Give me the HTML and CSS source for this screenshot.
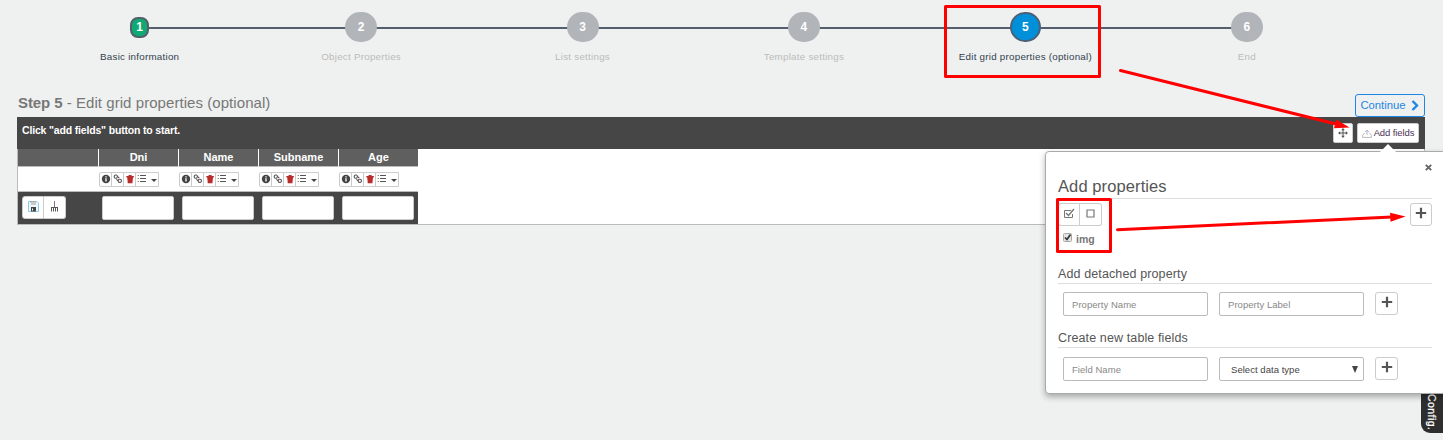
FILE: index.html
```html
<!DOCTYPE html>
<html lang="en">
<head>
<meta charset="utf-8">
<title>Edit grid properties</title>
<link rel="stylesheet" href="styles.css">
</head>
<body>
<svg class="defs" width="0" height="0">
  <symbol id="info" viewBox="0 0 10 10"><circle cx="5" cy="5" r="4.2" fill="#444"/><path d="M5 4.200v3.300M5 2.300v1.200" stroke="#fff" stroke-width="1.300" fill="none"/></symbol>
  <symbol id="link" viewBox="0 0 10 10"><g fill="none" stroke="#555" stroke-width="1.100"><rect x="1.200" y="1" width="3.200" height="3.200" rx="1.400"/><rect x="5.200" y="5.200" width="3.200" height="3.200" rx="1.400"/><path d="M4.800 2.600l1.500 1.500M3.400 5.200l1.600 1.700"/></g></symbol>
  <symbol id="trash" viewBox="0 0 10 10"><path d="M3.600 1h3v.9h2.200v1.700H1.400V1.900h2.200zM2.200 3.600h5.800l-.6 5.600H2.800z" fill="#b92c28"/></symbol>
  <symbol id="list" viewBox="0 0 10 10"><path d="M3 1.500h6M3 4.500h6M3 7.500h6" stroke="#555"/><path d="M.6 1.500h1.400M.6 4.500h1.400M.6 7.500h1.400" stroke="#a86"/></symbol>
  <symbol id="plus" viewBox="0 0 12 12"><path d="M6 .8v10.400M.8 6h10.400" stroke="#555" stroke-width="2.200"/></symbol>
</svg>

<ol class="steps">
  <li class="step done"><span class="dot">1</span><span class="label">Basic information</span></li>
  <li class="step"><span class="dot">2</span><span class="label">Object Properties</span></li>
  <li class="step"><span class="dot">3</span><span class="label">List settings</span></li>
  <li class="step"><span class="dot">4</span><span class="label">Template settings</span></li>
  <li class="step active"><span class="dot">5</span><span class="label">Edit grid properties (optional)</span></li>
  <li class="step"><span class="dot">6</span><span class="label">End</span></li>
</ol>

<main class="main">
  <header class="head">
    <h1 class="title"><b>Step 5</b> - Edit grid properties (optional)</h1>
    <button class="continue">Continue <svg width="8" height="11" viewBox="0 0 8 11"><path d="M1.500 1l4.500 4.500L1.500 10" fill="none" stroke="#1d86e6" stroke-width="2.400"/></svg></button>
  </header>
  <div class="bar">
    <span class="hint">Click "add fields" button to start.</span>
    <button class="btn move"><svg width="10" height="10" viewBox="0 0 10 10"><path d="M5 1v8M1 5h8" stroke="#555"/><path d="M5 0l1.800 2.200H3.200zM5 10l1.800-2.200H3.200zM0 5l2.200-1.800v3.600zM10 5L7.800 3.200v3.600z" fill="#555"/></svg></button>
    <button class="btn add"><svg width="10" height="9" viewBox="0 0 10 9"><path d="M2.500 4L.6 6.200v2.200h8.800V6.200L7.500 4" fill="none" stroke="#bbb"/><path d="M5 6V1.500M3 3.300L5 1l2 2.300" fill="none" stroke="#aab6c2"/></svg><span>Add fields</span></button>
  </div>
  <div class="panel">
    <div class="grid">
      <div class="th"></div><div class="th">Dni</div><div class="th">Name</div><div class="th">Subname</div><div class="th last">Age</div>
      <div class="td"></div>
      <div class="td"><span class="tools"><i><svg><use href="#info"/></svg></i><i><svg><use href="#link"/></svg></i><i><svg><use href="#trash"/></svg></i><i class="menu"><svg><use href="#list"/></svg><b class="caret"></b></i></span></div>
      <div class="td"><span class="tools"><i><svg><use href="#info"/></svg></i><i><svg><use href="#link"/></svg></i><i><svg><use href="#trash"/></svg></i><i class="menu"><svg><use href="#list"/></svg><b class="caret"></b></i></span></div>
      <div class="td"><span class="tools"><i><svg><use href="#info"/></svg></i><i><svg><use href="#link"/></svg></i><i><svg><use href="#trash"/></svg></i><i class="menu"><svg><use href="#list"/></svg><b class="caret"></b></i></span></div>
      <div class="td"><span class="tools"><i><svg><use href="#info"/></svg></i><i><svg><use href="#link"/></svg></i><i><svg><use href="#trash"/></svg></i><i class="menu"><svg><use href="#list"/></svg><b class="caret"></b></i></span></div>
      <div class="tf actions"><span class="pair">
        <button><svg width="11" height="11" viewBox="0 0 11 11"><path d="M.5.5h8.500l1.500 1.500v8.500H.5z" fill="#eef8ff" stroke="#8fcbea"/><path d="M2 1h6M3 3h5" stroke="#a98"/><path d="M3 6h5v4.500H3z" fill="#444"/><path d="M4 7.500h1v2H4z" fill="#fff"/></svg></button>
        <button><svg width="9" height="11" viewBox="0 0 9 11"><path d="M4.500 0v6" stroke="#8d6f92"/><path d="M1 6.500h7M1.500 7v3.500M3.500 7v3.500M5.500 7v3.500M7.500 7v3.500" stroke="#555"/></svg></button></span></div>
      <div class="tf"><input class="cell"></div><div class="tf"><input class="cell"></div><div class="tf"><input class="cell"></div><div class="tf"><input class="cell"></div>
    </div>
  </div>
</main>

<div class="config">Config.</div>

<section class="popover">
  <span class="tip"></span>
  <div class="close"><svg width="7" height="7" viewBox="0 0 7 7"><path d="M.8.8l5.400 5.400M6.200.8L.8 6.200" stroke="#666" stroke-width="1.900"/></svg></div>
  <h2 class="h big"><span>Add properties</span></h2>
  <div class="choose">
    <div>
      <span class="pair light">
        <button><svg width="12" height="11" viewBox="0 0 12 11"><path d="M8 2.500H1.500v7h8V6" fill="none" stroke="#777"/><path d="M3 5l2.500 2.500L11 1" fill="none" stroke="#777" stroke-width="1.400"/></svg></button>
        <button><svg width="9" height="9" viewBox="0 0 9 9"><path d="M1 1h7v7H1z" fill="none" stroke="#777" stroke-width="1.200"/></svg></button>
      </span>
      <div class="check"><svg width="9" height="9" viewBox="0 0 9 9"><rect x=".5" y=".5" width="8" height="8" rx="1" fill="#e4e4e4" stroke="#aaa"/><path d="M2 4.500l2 2L7.500 1.500" fill="none" stroke="#333" stroke-width="1.700"/></svg><b>img</b></div>
    </div>
    <button class="plus"><svg><use href="#plus"/></svg></button>
  </div>
  <h3 class="h mid"><span>Add detached property</span></h3>
  <div class="fields">
    <input class="field" placeholder="Property Name"><input class="field" placeholder="Property Label"><button class="plus"><svg><use href="#plus"/></svg></button>
  </div>
  <h3 class="h low"><span>Create new table fields</span></h3>
  <div class="fields second">
    <input class="field" placeholder="Field Name"><div class="field select"><span>Select data type</span><svg width="6" height="7" viewBox="0 0 6 7"><path d="M0 0h6L3 7z" fill="#444"/></svg></div><button class="plus"><svg><use href="#plus"/></svg></button>
  </div>
</section>

<svg class="marks" width="1443" height="440" viewBox="0 0 1443 440">
  <g fill="none" stroke="#f00" stroke-width="3" stroke-linejoin="round" stroke-linecap="round">
    <rect x="945.500" y="6.500" width="154" height="70"/>
    <rect x="1057.500" y="199.500" width="53" height="52"/>
    <path d="M1120.500 70.500L1338 124.500M1117.500 229.800L1392 217"/>
  </g>
  <path d="M1349.500 127.500l-15.500 .7 2.200-8.700zM1405.500 216.500l-15 5.300-.4-9z" fill="#f00"/>
</svg>
</body>
</html>
```

FILE: styles.css
```css
* { box-sizing: border-box; }
body { margin: 0; width: 1443px; height: 440px; overflow: hidden; position: relative; background: #eff1f0; font-family: "Liberation Sans", Arial, sans-serif; color: #555; }
button { font-family: inherit; margin: 0; padding: 0; display: flex; align-items: center; justify-content: center; background: #fff; border: 1px solid #ccc; }
svg { display: block; }
.defs { position: absolute; }

.steps { list-style: none; margin: 0; padding: 12px 85.500px 0 29px; height: 94px; display: grid; grid-template-columns: repeat(6, 1fr); }
.step { display: flex; flex-direction: column; align-items: center; background: linear-gradient(#545e6c, #545e6c) 0 15px / 100% 2px no-repeat; }
.step:first-child { background-position: 100% 15px; background-size: 50% 2px; }
.step:last-child { background-size: 50% 2px; }
.dot { width: 32px; height: 30px; border-radius: 15px; background: #b1b4b9; color: #fff; font: bold 12px/30px "Liberation Sans", sans-serif; text-align: center; }
.done .dot { width: 19px; height: 21px; margin: 5px 0 4px; border: 2px solid #52606c; border-radius: 8px; background: #0fa974; line-height: 16px; }
.active .dot { border: 2px solid #4c6075; background: #0090d9; line-height: 26px; width: 31px; }
.label { margin-top: 8px; font-size: 9.800px; line-height: 13px; letter-spacing: .24px; color: #bbb; white-space: nowrap; }
.done .label, .active .label { color: #333f4f; }

.main { padding: 0 18px 0 17px; }
.head { height: 23px; display: flex; justify-content: space-between; align-items: flex-start; }
.title { margin: 0; padding-left: 1px; font-size: 15px; line-height: 18px; letter-spacing: .06px; font-weight: normal; color: #777; }
.title b { letter-spacing: -.1px; }
.continue { width: 70px; height: 23px; border: 1px solid #1d86e6; border-radius: 3px; background: transparent; color: #1d86e6; font-size: 11.300px; line-height: 13px; gap: 5px; padding: 0 1px 1px 0; }
.bar { height: 32px; background: #464646; display: flex; padding: 5px 6px 0 5px; }
.hint { flex: 1; color: #fff; font-size: 10.500px; line-height: 16px; letter-spacing: -.17px; font-weight: bold; }
.btn { height: 20px; margin-top: 1px; border-radius: 2px; }
.move { width: 20px; margin-right: 4px; }
.add { width: 62px; gap: 2px; font-size: 9.500px; letter-spacing: -.1px; color: #4d3355; }
.add span { margin-top: -1px; }
.panel { height: 76px; background: #fff; border: 1px solid #bbb; border-top: 0; }
.grid { width: 400px; display: grid; grid-template-columns: 81px 80px 80px 80px 79px; grid-template-rows: 18px 25px 32px; }
.th { background: #5f5f5f; border-right: 1px solid #fff; border-bottom: 1px solid #bbb; text-align: center; font-size: 11px; line-height: 17px; font-weight: bold; color: #fff; }
.last { border-right: 0; }
.td { border-bottom: 1px solid #bbb; padding: 5px 0 0; }
.tools { width: 60px; height: 15px; display: flex; border: 1px solid #ccc; border-radius: 2px 0 0 2px; }
.tools i { width: 12px; padding: 1px 0 0 1px; border-right: 1px solid #ccc; }
.tools svg { width: 10px; height: 10px; }
.tools .menu { flex: 1; display: flex; border: 0; gap: 4px; }
.caret { margin-top: 5px; width: 6px; height: 3px; border: 3px solid transparent; border-top-color: #444; border-bottom: 0; }
.tf { background: #464646; padding: 4px 3px; }
.actions { padding-left: 4px; }
.cell { display: block; width: 72px; height: 24px; border: 1px solid #ccc; border-radius: 2px; background: #fff; }
.pair { display: flex; width: 44px; height: 23px; }
.pair button { width: 22px; padding-bottom: 2px; }
.pair button:first-child { border-radius: 3px 0 0 3px; }
.pair button:last-child { border-left: 0; border-radius: 0 3px 3px 0; }

.config { position: absolute; left: 1421px; top: 380px; width: 22px; height: 53px; padding: 14px 3px 0 0; background: #2e2e2e; border-radius: 0 0 0 9px; color: #fff; writing-mode: vertical-rl; font: 10.500px/17px "Liberation Sans", sans-serif; -webkit-text-stroke: .25px #fff; letter-spacing: .45px; }

.popover { position: absolute; left: 1045px; top: 151px; width: 401px; height: 243px; padding: 12px 12px 0; background: #fff; border: 1px solid #aaa; border-radius: 4px; box-shadow: 0 3px 6px rgba(0,0,0,.3); }
.tip { position: absolute; left: 334px; top: -8px; width: 16px; height: 8px; border: 8px solid transparent; border-bottom-color: #fff; border-top: 0; }
.close { height: 12px; padding-left: 367px; }
.h { width: 374px; margin: 0; border-bottom: 1px solid #ddd; font-weight: normal; color: #555; white-space: nowrap; }
.big { height: 23px; font-size: 16.500px; line-height: 20px; letter-spacing: .1px; }
.choose { height: 66px; width: 374px; display: flex; justify-content: space-between; padding-top: 4px; }
.check { display: flex; gap: 4px; padding: 7px 0 0 5px; font-size: 10.500px; line-height: 13px; color: #777; }
.plus { width: 22px; height: 23px; border-radius: 3px; }
.plus svg { width: 12px; height: 12px; margin-bottom: 3px; }
.mid, .low { height: 19px; font-size: 12.500px; line-height: 18px; letter-spacing: .12px; }
.fields { display: flex; gap: 11px; padding: 8px 0 0 5px; height: 45px; }
.fields .plus { width: 23px; }
.second { padding-top: 9px; }
.field { width: 145px; height: 24px; padding: 0 8px; border: 1px solid #bbb; border-radius: 2px; background: #fff; font: 9.500px "Liberation Sans", sans-serif; letter-spacing: .04px; color: #444; }
.field::placeholder { color: #888; }
.select { display: flex; align-items: center; justify-content: space-between; padding: 0 5px 0 11px; }
.marks { position: absolute; left: 0; top: 0; }
```
